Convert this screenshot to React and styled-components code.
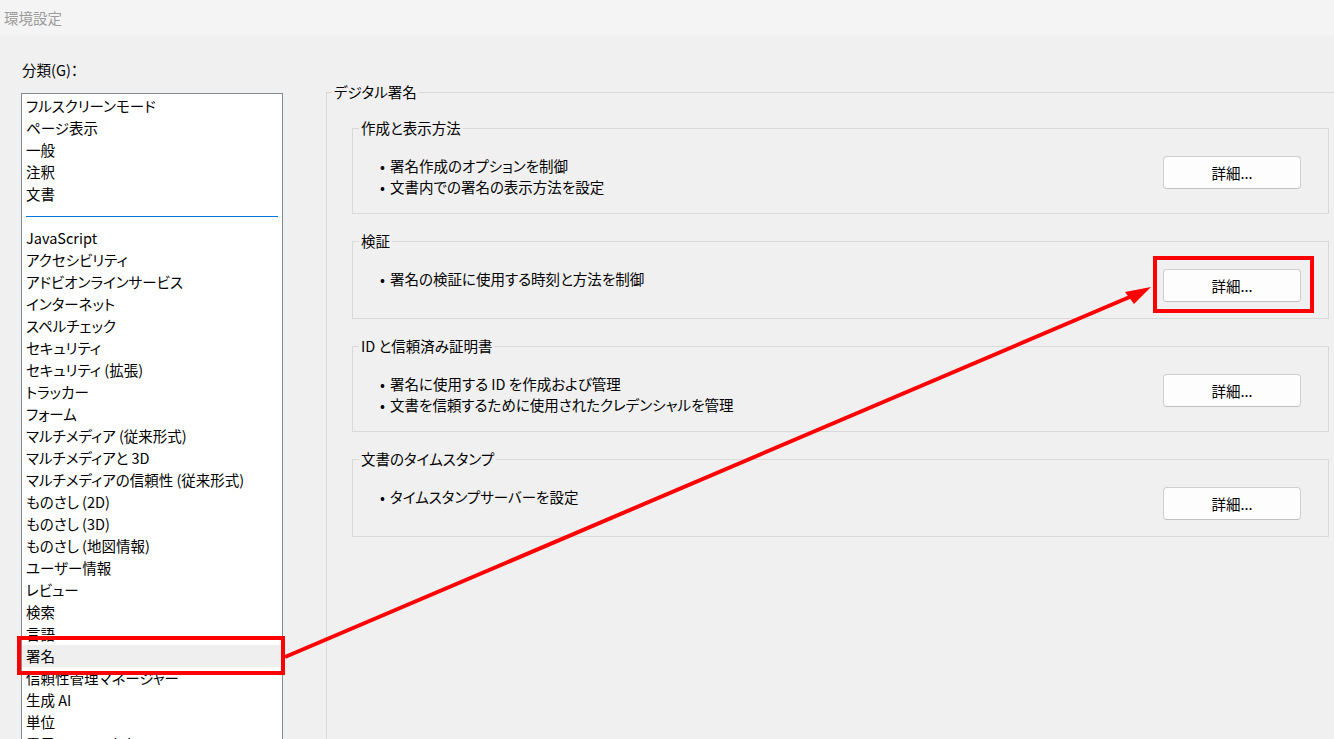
import React from "react";
import styled, { createGlobalStyle } from "styled-components";

const GlobalStyle = createGlobalStyle`
  html, body {
    margin: 0;
    padding: 0;
    background: #f0f0f0;
  }
  body {
    font-family: "Noto Sans CJK JP", "Noto Sans", sans-serif;
    font-size: 14.5px;
    color: #000;
    font-feature-settings: "palt";
  }
`;

const categories = [
  "フルスクリーンモード",
  "ページ表示",
  "一般",
  "注釈",
  "文書",
  null,
  "JavaScript",
  "アクセシビリティ",
  "アドビオンラインサービス",
  "インターネット",
  "スペルチェック",
  "セキュリティ",
  "セキュリティ (拡張)",
  "トラッカー",
  "フォーム",
  "マルチメディア (従来形式)",
  "マルチメディアと 3D",
  "マルチメディアの信頼性 (従来形式)",
  "ものさし (2D)",
  "ものさし (3D)",
  "ものさし (地図情報)",
  "ユーザー情報",
  "レビュー",
  "検索",
  "言語",
  "署名",
  "信頼性管理マネージャー",
  "生成 AI",
  "単位",
  "電子メールアカウント",
];

const sections = [
  {
    title: "作成と表示方法",
    lines: ["署名作成のオプションを制御", "文書内での署名の表示方法を設定"],
  },
  {
    title: "検証",
    lines: ["署名の検証に使用する時刻と方法を制御"],
  },
  {
    title: "ID と信頼済み証明書",
    lines: [
      "署名に使用する ID を作成および管理",
      "文書を信頼するために使用されたクレデンシャルを管理",
    ],
  },
  {
    title: "文書のタイムスタンプ",
    lines: ["タイムスタンプサーバーを設定"],
  },
];

const Window = styled.div`
  position: relative;
  width: 100vw;
  height: 100vh;
  overflow: hidden;
`;

const TitleBar = styled.div`
  height: 35px;
  display: flex;
  align-items: center;
  padding-left: 4px;
  background: #f4f4f4;
  color: #9c9c9c;
`;

const Body = styled.div`
  display: flex;
  align-items: flex-start;
`;

const Sidebar = styled.div`
  padding: 24px 0 0 21px;
  width: 262px;
  flex-shrink: 0;
`;

const CategoryLabel = styled.div`
  line-height: 22px;
  padding-left: 1px;
  margin-bottom: 12px;
`;

const CategoryList = styled.div`
  border: 1px solid #868a91;
  background: #fff;
  padding-top: 1px;
  height: 700px;
  overflow: hidden;
`;

const Item = styled.div`
  height: 22px;
  line-height: 22px;
  padding-left: 4px;
  white-space: nowrap;
  background: ${(p) => (p.$selected ? "#efefef" : "transparent")};
`;

const Separator = styled.div`
  height: 22px;
  display: flex;
  align-items: center;
  padding: 0 4px;

  &::after {
    content: "";
    flex: 1;
    height: 1px;
    background: #0078d7;
  }
`;

const Settings = styled.div`
  padding-top: 46px;
  margin-left: 43px;
`;

const Group = styled.fieldset`
  margin: 0;
  padding: 0;
  border: 1px solid #d9d9d9;
  min-width: 0;
`;

const OuterGroup = styled(Group)`
  width: 1060px;
  height: 720px;
`;

const Legend = styled.legend`
  margin-left: ${(p) => p.$offset}px;
  padding: 0 2px;
  line-height: 22px;
`;

const GroupStack = styled.div`
  display: flex;
  flex-direction: column;
  gap: 16px;
  padding: 14px 0 0 25px;
`;

const SectionGroup = styled(Group)`
  width: 977px;
  box-sizing: border-box;
`;

const SectionBody = styled.div`
  display: flex;
  align-items: flex-start;
  justify-content: space-between;
  padding: 17px 27px 16px 27px;
`;

const Lines = styled.ul`
  margin: 0;
  padding: 0;
  list-style: none;
`;

const Line = styled.li`
  line-height: 20.5px;
  display: flex;
  white-space: nowrap;
`;

const Bullet = styled.span`
  width: 10px;
  flex-shrink: 0;
`;

const DetailButton = styled.button`
  width: 138px;
  height: 33px;
  border: 1px solid #cfcfcf;
  border-bottom-color: #c2c2c2;
  border-radius: 4px;
  background: #fdfdfd;
  font: inherit;
  color: #000;
  padding: 0;
  flex-shrink: 0;
`;

const Annotations = styled.svg`
  position: absolute;
  left: 0;
  top: 0;
  width: 1334px;
  height: 739px;
  pointer-events: none;
`;

export default function App() {
  return (
    <Window>
      <GlobalStyle />
      <TitleBar>環境設定</TitleBar>
      <Body>
        <Sidebar>
          <CategoryLabel>分類(G)：</CategoryLabel>
          <CategoryList>
            {categories.map((c, i) =>
              c === null ? (
                <Separator key={i} />
              ) : (
                <Item key={i} $selected={c === "署名"}>
                  {c}
                </Item>
              )
            )}
          </CategoryList>
        </Sidebar>
        <Settings>
          <OuterGroup>
            <Legend $offset={5}>デジタル署名</Legend>
            <GroupStack>
              {sections.map((s) => (
                <SectionGroup key={s.title}>
                  <Legend $offset={6}>{s.title}</Legend>
                  <SectionBody>
                    <Lines>
                      {s.lines.map((l) => (
                        <Line key={l}>
                          <Bullet>•</Bullet>
                          {l}
                        </Line>
                      ))}
                    </Lines>
                    <DetailButton>詳細...</DetailButton>
                  </SectionBody>
                </SectionGroup>
              ))}
            </GroupStack>
          </OuterGroup>
        </Settings>
      </Body>
      <Annotations viewBox="0 0 1334 739">
        <rect x="19" y="638" width="264" height="35" fill="none" stroke="#ff0000" strokeWidth="4" />
        <rect x="1155" y="258" width="157" height="53" fill="none" stroke="#ff0000" strokeWidth="4" />
        <line x1="285" y1="657" x2="1132" y2="296" stroke="#ff0000" strokeWidth="4" />
        <polygon points="1151,287 1125,292 1134,304" fill="#ff0000" />
      </Annotations>
    </Window>
  );
}
